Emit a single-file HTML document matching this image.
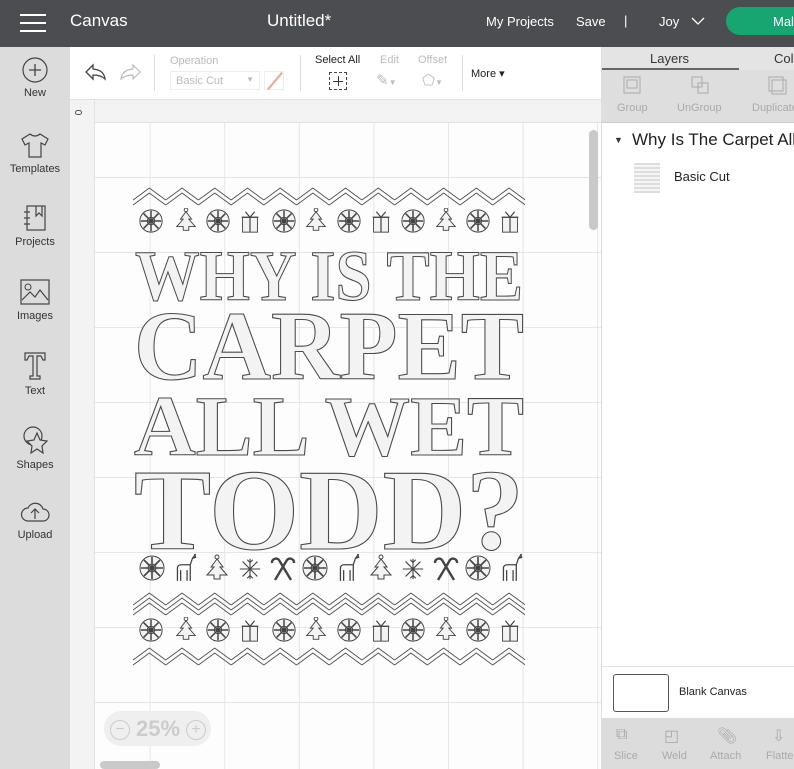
<!DOCTYPE html>
<html><head><meta charset="utf-8"><style>
*{margin:0;padding:0;box-sizing:border-box}
body{width:794px;height:769px;overflow:hidden;font-family:"Liberation Sans",sans-serif;background:#fff;position:relative}
.top{position:absolute;left:0;top:0;width:794px;height:47px;background:#4c4d51;color:#fff}
.top span{position:absolute;top:11px;font-size:17px}
.side{position:absolute;left:0;top:47px;width:70px;height:722px;background:#dcdcdc}
.si{position:absolute;left:0;width:70px;text-align:center;font-size:11px;color:#333}
.si svg{display:block;margin:0 auto 4px}
.tb{position:absolute;left:70px;top:47px;width:531px;height:53px;background:#fff;border-bottom:1px solid #e2e2e2}
.lbl{position:absolute;font-size:11px}
.rp{position:absolute;left:601px;top:47px;width:193px;height:722px;background:#fff;border-left:1px solid #ddd}
</style></head><body>
<div class="top">
<div style="position:absolute;left:20px;top:14px;width:26px;height:2px;background:#fff;box-shadow:0 8px 0 #fff,0 16px 0 #fff"></div>
<span style="left:70px">Canvas</span>
<span style="left:267px">Untitled*</span>
<span style="left:486px;font-size:13px;top:14px">My Projects</span>
<span style="left:576px;font-size:13px;top:14px">Save</span>
<span style="left:624px;font-size:13px;top:13px">|</span>
<span style="left:659px;font-size:13px;top:14px">Joy</span>
<svg style="position:absolute;left:691px;top:17px" width="14" height="9"><path d="M1 1l6 6 6-6" stroke="#fff" fill="none" stroke-width="1.3"/></svg>
<div style="position:absolute;left:726px;top:7px;width:90px;height:28px;border-radius:14px;background:#17a672"></div>
<span style="left:773px;font-size:13px;top:14px">Mal</span>
</div>

<div class="side">
<div class="si" style="top:10px"><svg width="26" height="26"><circle cx="13" cy="13" r="12" fill="none" stroke="#444" stroke-width="1.2"/><path d="M13 7v12M7 13h12" stroke="#444" stroke-width="1.3"/></svg>New</div>
<div class="si" style="top:84px"><svg width="30" height="28"><path d="M10 3l-8 5 3 6 4-2v14h12V12l4 2 3-6-8-5q-5 4-10 0z" fill="none" stroke="#444" stroke-width="1.2"/></svg>Templates</div>
<div class="si" style="top:157px"><svg width="26" height="28"><rect x="5" y="2" width="18" height="24" fill="none" stroke="#444" stroke-width="1.2"/><path d="M2 8h6M2 14h6M2 20h6M14 2v10l3-3 3 3V2" fill="none" stroke="#444" stroke-width="1.2"/></svg>Projects</div>
<div class="si" style="top:231px"><svg width="32" height="28"><rect x="2" y="2" width="28" height="24" fill="none" stroke="#444" stroke-width="1.2"/><circle cx="9" cy="9" r="3" fill="none" stroke="#444"/><path d="M3 22l8-8 5 5 5-7 8 10" fill="none" stroke="#444" stroke-width="1.2"/></svg>Images</div>
<div class="si" style="top:304px"><svg width="26" height="30"><path d="M3 2h20v7h-2l-2-4h-4v20h3v3H8v-3h3V5H7L5 9H3z" fill="none" stroke="#444" stroke-width="1.2"/></svg>Text</div>
<div class="si" style="top:378px"><svg width="28" height="30"><circle cx="12" cy="11" r="9" fill="none" stroke="#444" stroke-width="1.2"/><path d="M16 8l3 7 7 1-5 5 1 7-6-4-6 4 1-7-5-5 7-1z" fill="#dcdcdc" stroke="#444" stroke-width="1.2"/></svg>Shapes</div>
<div class="si" style="top:452px"><svg width="30" height="26"><path d="M8 22h15a6 6 0 0 0 0-12 8 8 0 0 0-15-1 6 6 0 0 0 0 13z" fill="none" stroke="#444" stroke-width="1.2"/><path d="M15 20v-9M11 14l4-4 4 4" fill="none" stroke="#444" stroke-width="1.2"/></svg>Upload</div>
</div>

<div class="tb">
<svg style="position:absolute;left:14px;top:15px" width="24" height="20"><path d="M9 3L2 10l7 7v-4q8 0 12 4-1-9-12-10z" fill="none" stroke="#444" stroke-width="1.3"/></svg>
<svg style="position:absolute;left:48px;top:15px" width="24" height="20"><path d="M15 3l7 7-7 7v-4q-8 0-12 4 1-9 12-10z" fill="none" stroke="#bbb" stroke-width="1.2"/></svg>
<div style="position:absolute;left:84px;top:8px;width:1px;height:36px;background:#ddd"></div>
<div class="lbl" style="left:100px;top:8px;color:#bbb">Operation</div>
<div style="position:absolute;left:100px;top:24px;width:90px;height:19px;border:1px solid #eee;font-size:11px;color:#bbb;padding:3px 5px">Basic Cut<span style="position:absolute;right:5px;font-size:8px">▼</span></div>
<div style="position:absolute;left:194px;top:24px;width:20px;height:19px;border:1px solid #eee"><div style="position:absolute;left:9px;top:-2px;width:2px;height:22px;background:#eaa89a;transform:rotate(40deg)"></div></div>
<div style="position:absolute;left:230px;top:8px;width:1px;height:36px;background:#ddd"></div>
<div class="lbl" style="left:245px;top:7px;color:#222">Select All</div>
<div style="position:absolute;left:259px;top:25px;width:18px;height:18px;border:1px dashed #444"><div style="position:absolute;left:3px;top:8px;width:10px;height:1px;background:#333"></div><div style="position:absolute;left:8px;top:3px;width:1px;height:10px;background:#333"></div></div>
<div class="lbl" style="left:310px;top:7px;color:#bbb">Edit</div>
<div style="position:absolute;left:306px;top:24px;font-size:15px;color:#bbb">✎<span style="font-size:8px">▼</span></div>
<div class="lbl" style="left:348px;top:7px;color:#bbb">Offset</div>
<div style="position:absolute;left:352px;top:24px;font-size:15px;color:#bbb">⬠<span style="font-size:8px">▼</span></div>
<div style="position:absolute;left:392px;top:8px;width:1px;height:36px;background:#ddd"></div>
<div class="lbl" style="left:401px;top:20px;color:#222">More ▾</div>
</div>

<div style="position:absolute;left:70px;top:100px;width:531px;height:669px;background:#fdfdfd;
background-image:linear-gradient(#e6e6e6 1px,transparent 1px),linear-gradient(90deg,#e6e6e6 1px,transparent 1px);background-size:74.6px 75px;background-position:5px 2px,5px 2px"></div>
<div style="position:absolute;left:70px;top:100px;width:531px;height:23px;background:#f3f3f3;border-bottom:1px solid #e2e2e2"></div>
<div style="position:absolute;left:70px;top:100px;width:25px;height:669px;background:#f3f3f3;border-right:1px solid #e2e2e2"></div>
<div style="position:absolute;left:75px;top:110px;width:7px;height:5px;border:1px solid #555;border-radius:3px"></div>
<div style="position:absolute;left:589px;top:130px;width:9px;height:100px;border-radius:5px;background:#c9c9c9"></div>
<div style="position:absolute;left:100px;top:761px;width:60px;height:8px;border-radius:4px;background:#c9c9c9"></div>
<div style="position:absolute;left:104px;top:711px;width:107px;height:35px;border-radius:17px;background:#efefef"></div>
<div style="position:absolute;left:110px;top:720px;width:20px;height:20px;border-radius:50%;border:1px solid #ccc;color:#ccc;font-size:16px;line-height:17px;text-align:center">−</div>
<div style="position:absolute;left:136px;top:716px;font-size:22px;color:#ccc;font-weight:bold">25%</div>
<div style="position:absolute;left:186px;top:720px;width:20px;height:20px;border-radius:50%;border:1px solid #ccc;color:#ccc;font-size:16px;line-height:17px;text-align:center">+</div>

<svg style="position:absolute;left:0;top:0" width="601" height="769">
<defs>
<pattern id="zz" x="133" y="0" width="32.7" height="769" patternUnits="userSpaceOnUse">
<path d="M0 200L16.35 188L32.7 200M0 205L16.35 193L32.7 205" fill="none" stroke="#444" stroke-width="0.9"/>
</pattern>
<pattern id="zz2" x="133" y="0" width="32.7" height="769" patternUnits="userSpaceOnUse">
<path d="M0 605L16.35 593L32.7 605M0 610L16.35 598L32.7 610M0 615L16.35 603L32.7 615" fill="none" stroke="#444" stroke-width="0.9"/>
</pattern>
<pattern id="zz3" x="133" y="0" width="32.7" height="769" patternUnits="userSpaceOnUse">
<path d="M0 660L16.35 648L32.7 660M0 665L16.35 653L32.7 665" fill="none" stroke="#444" stroke-width="0.9"/>
</pattern>
<symbol id="sf" viewBox="-14 -14 28 28"><circle r="12" fill="#f3f3f3" stroke="#444"/><path d="M-11 0H11M0-11V11M-8-8L8 8M-8 8L8-8" stroke="#444" stroke-width="1.6"/><circle r="4" fill="none" stroke="#444"/></symbol>
<symbol id="tr" viewBox="-14 -14 28 28"><path d="M0-10L-6-2h3L-10 6h7v4h6V6h7L3-2h3z" fill="#f3f3f3" stroke="#444"/><circle cy="-12" r="2" fill="none" stroke="#444"/></symbol>
<symbol id="gf" viewBox="-14 -14 28 28"><rect x="-8" y="-4" width="16" height="16" fill="#f3f3f3" stroke="#444"/><path d="M-9-4h18M0-4v16M0-4l-5-6M0-4l5-6" stroke="#444" fill="none" stroke-width="1.3"/></symbol>
<symbol id="dr" viewBox="-14 -14 28 28"><path d="M-8 12V0q0-3 4-3h8l2-6 3-1-1-3M6-9l3-4M4-3v15M-5 12V2M1 12V2" fill="none" stroke="#444" stroke-width="1.2"/></symbol>
<symbol id="cc" viewBox="-14 -14 28 28"><path d="M-8 12L4-8a4 4 0 0 1 7 3M8 12L-4-8a4 4 0 0 0-7 3" fill="none" stroke="#444" stroke-width="2.4"/></symbol>
<symbol id="sf2" viewBox="-14 -14 28 28"><path d="M-11 0H11M0-11V11M-8-8L8 8M-8 8L8-8M-3-10L0-7 3-10M-3 10L0 7 3 10" stroke="#444" fill="none" stroke-width="1.2"/></symbol>
</defs>
<rect x="133" y="186" width="392" height="22" fill="url(#zz)"/>
<rect x="133" y="590" width="392" height="27" fill="url(#zz2)"/>
<rect x="133" y="646" width="392" height="22" fill="url(#zz3)"/>
<g>
<use href="#sf" x="138" y="208" width="26" height="26"/><use href="#tr" x="173" y="208" width="26" height="26"/><use href="#sf" x="205" y="208" width="26" height="26"/><use href="#gf" x="237" y="208" width="26" height="26"/>
<use href="#sf" x="271" y="208" width="26" height="26"/><use href="#tr" x="303" y="208" width="26" height="26"/><use href="#sf" x="336" y="208" width="26" height="26"/><use href="#gf" x="368" y="208" width="26" height="26"/>
<use href="#sf" x="400" y="208" width="26" height="26"/><use href="#tr" x="433" y="208" width="26" height="26"/><use href="#sf" x="465" y="208" width="26" height="26"/><use href="#gf" x="497" y="208" width="26" height="26"/>
</g>
<g>
<use href="#sf" x="138" y="554" width="28" height="28"/><use href="#dr" x="171" y="552" width="30" height="32"/><use href="#tr" x="203" y="554" width="28" height="30"/><use href="#sf2" x="237" y="556" width="26" height="26"/>
<use href="#cc" x="269" y="554" width="28" height="28"/><use href="#sf" x="301" y="554" width="28" height="28"/><use href="#dr" x="334" y="552" width="30" height="32"/><use href="#tr" x="367" y="554" width="28" height="30"/>
<use href="#sf2" x="400" y="556" width="26" height="26"/><use href="#cc" x="432" y="554" width="28" height="28"/><use href="#sf" x="464" y="554" width="28" height="28"/><use href="#dr" x="497" y="552" width="30" height="32"/>
</g>
<g>
<use href="#sf" x="138" y="617" width="26" height="26"/><use href="#tr" x="173" y="617" width="26" height="26"/><use href="#sf" x="205" y="617" width="26" height="26"/><use href="#gf" x="237" y="617" width="26" height="26"/>
<use href="#sf" x="271" y="617" width="26" height="26"/><use href="#tr" x="303" y="617" width="26" height="26"/><use href="#sf" x="336" y="617" width="26" height="26"/><use href="#gf" x="368" y="617" width="26" height="26"/>
<use href="#sf" x="400" y="617" width="26" height="26"/><use href="#tr" x="433" y="617" width="26" height="26"/><use href="#sf" x="465" y="617" width="26" height="26"/><use href="#gf" x="497" y="617" width="26" height="26"/>
</g>
<g font-family="Liberation Serif, serif" font-weight="bold" fill="#f3f3f3" stroke="#4a4a4a" stroke-width="1.1">
<text x="135" y="300" font-size="72" textLength="388" lengthAdjust="spacingAndGlyphs">WHY IS THE</text>
<text x="134" y="379" font-size="99" textLength="390" lengthAdjust="spacingAndGlyphs">CARPET</text>
<text x="134" y="455" font-size="86" textLength="390" lengthAdjust="spacingAndGlyphs">ALL WET</text>
<text x="134" y="549" font-size="116" textLength="390" lengthAdjust="spacingAndGlyphs">TODD?</text>
</g>
</svg>

<div class="rp">
<div style="position:absolute;left:0;top:0;width:193px;height:23px;background:#e4e4e4"></div>
<div style="position:absolute;left:48px;top:4px;font-size:13px;color:#333">Layers</div>
<div style="position:absolute;left:172px;top:4px;font-size:13px;color:#333">Col</div>
<div style="position:absolute;left:0;top:21px;width:137px;height:2px;background:#666"></div>
<div style="position:absolute;left:0;top:23px;width:193px;height:53px;background:#dedede;border-bottom:1px solid #ccc"></div>
<svg style="position:absolute;left:20px;top:28px" width="20" height="20"><rect x="2" y="2" width="16" height="16" fill="none" stroke="#aaa"/><rect x="5" y="5" width="10" height="8" fill="none" stroke="#aaa"/></svg>
<svg style="position:absolute;left:88px;top:28px" width="20" height="20"><rect x="2" y="2" width="10" height="10" fill="none" stroke="#aaa"/><rect x="8" y="8" width="10" height="10" fill="none" stroke="#aaa"/></svg>
<svg style="position:absolute;left:165px;top:28px" width="20" height="20"><rect x="2" y="2" width="14" height="14" fill="none" stroke="#aaa"/><rect x="5" y="5" width="14" height="14" fill="none" stroke="#aaa"/></svg>
<div style="position:absolute;left:15px;top:55px;font-size:11px;color:#aaa">Group</div>
<div style="position:absolute;left:75px;top:55px;font-size:11px;color:#aaa">UnGroup</div>
<div style="position:absolute;left:150px;top:55px;font-size:11px;color:#aaa;white-space:nowrap">Duplicate</div>
<div style="position:absolute;left:12px;top:88px;font-size:9px;color:#333">▼</div>
<div style="position:absolute;left:30px;top:83px;font-size:17px;color:#222;white-space:nowrap">Why Is The Carpet All</div>
<div style="position:absolute;left:32px;top:116px;width:26px;height:30px;background:repeating-linear-gradient(#ddd 0 2px,#f5f5f5 2px 4px)"></div>
<div style="position:absolute;left:72px;top:122px;font-size:13px;color:#222">Basic Cut</div>
<div style="position:absolute;left:0;top:619px;width:193px;height:1px;background:#e2e2e2"></div>
<div style="position:absolute;left:11px;top:627px;width:56px;height:38px;border:1px solid #555;border-radius:3px"></div>
<div style="position:absolute;left:77px;top:639px;font-size:11px;color:#222">Blank Canvas</div>
<div style="position:absolute;left:0;top:671px;width:193px;height:51px;background:#dcdcdc"></div>
<div style="position:absolute;left:14px;top:679px;font-size:16px;color:#aaa">⧉</div>
<div style="position:absolute;left:62px;top:679px;font-size:16px;color:#aaa">◰</div>
<div style="position:absolute;left:115px;top:679px;font-size:16px;color:#aaa">📎︎</div>
<div style="position:absolute;left:170px;top:679px;font-size:16px;color:#aaa">⇩</div>
<div style="position:absolute;left:12px;top:703px;font-size:11px;color:#aaa">Slice</div>
<div style="position:absolute;left:60px;top:703px;font-size:11px;color:#aaa">Weld</div>
<div style="position:absolute;left:108px;top:703px;font-size:11px;color:#aaa">Attach</div>
<div style="position:absolute;left:164px;top:703px;font-size:11px;color:#aaa">Flatten</div>
</div>
</body></html>
